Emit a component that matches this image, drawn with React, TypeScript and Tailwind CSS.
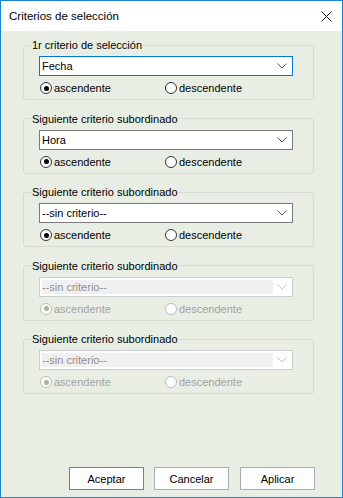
const font = "font-['Liberation_Sans',Arial,sans-serif]";

type Criterion = {
  label: string;
  value: string;
  enabled: boolean;
  focused?: boolean;
};

const criteria: Criterion[] = [
  { label: "1r criterio de selección", value: "Fecha", enabled: true, focused: true },
  { label: "Siguiente criterio subordinado", value: "Hora", enabled: true },
  { label: "Siguiente criterio subordinado", value: "--sin criterio--", enabled: true },
  { label: "Siguiente criterio subordinado", value: "--sin criterio--", enabled: false },
  { label: "Siguiente criterio subordinado", value: "--sin criterio--", enabled: false },
];

function Chevron({ enabled }: { enabled: boolean }) {
  return (
    <svg width="10" height="6" viewBox="0 0 10 6" aria-hidden="true">
      <path
        d="M0.5 0.5 L5 5 L9.5 0.5"
        fill="none"
        stroke={enabled ? "#5a5a5a" : "#c4c4c4"}
        strokeWidth="1"
      />
    </svg>
  );
}

function Radio({
  checked,
  enabled,
  label,
}: {
  checked: boolean;
  enabled: boolean;
  label: string;
}) {
  return (
    <div className="flex h-[14px] items-center">
      <span
        className={`flex h-[12px] w-[12px] items-center justify-center rounded-full border bg-white ${
          enabled ? "border-[#333333]" : "border-[#bcbcbc]"
        }`}
      >
        {checked && (
          <span
            className={`h-[5px] w-[5px] rounded-full ${
              enabled ? "bg-black" : "bg-[#a3b59b]"
            }`}
          />
        )}
      </span>
      <span
        className={`ml-[2px] text-[11px] leading-[14px] ${
          enabled ? "text-black" : "text-[#a2a2a2]"
        }`}
      >
        {label}
      </span>
    </div>
  );
}

function CriterionGroup({ c }: { c: Criterion }) {
  const borderColor = !c.enabled
    ? "border-[#cccccc]"
    : c.focused
      ? "border-[#0078d7]"
      : "border-[#7a7a7a]";
  return (
    <fieldset className="m-0 w-[291px] rounded-[3px] border border-[#d6dad2] p-0 pb-[4px]">
      <legend className="ml-[7px] px-[1px] text-[11px] leading-[14px] text-black">
        {c.label}
      </legend>
      <div
        className={`ml-[15px] mt-[4px] flex h-[20px] w-[254px] items-center border bg-white ${borderColor}`}
      >
        {c.enabled ? (
          <span className="ml-[2px] flex-1 text-[11px] leading-[14px] text-black">
            {c.value}
          </span>
        ) : (
          <span className="ml-[2px] flex h-[14px] w-[231px] items-center bg-[#f0f0f0] text-[11px] leading-[14px] text-[#8e8e8e]">
            {c.value}
          </span>
        )}
        <span className="ml-auto mr-[5px] flex items-center">
          <Chevron enabled={c.enabled} />
        </span>
      </div>
      <div className="ml-[16px] mt-[5px] flex">
        <div className="w-[125px]">
          <Radio checked enabled={c.enabled} label="ascendente" />
        </div>
        <Radio checked={false} enabled={c.enabled} label="descendente" />
      </div>
    </fieldset>
  );
}

function Button({ label, isDefault }: { label: string; isDefault?: boolean }) {
  return (
    <button
      className={`flex h-[23px] w-[75px] items-center justify-center border bg-[#fdfdfd] text-[11px] leading-[14px] text-black ${
        isDefault ? "border-[#6f8d5c]" : "border-[#adadad]"
      }`}
    >
      {label}
    </button>
  );
}

export default function App() {
  return (
    <div
      className={`${font} flex h-[498px] w-[343px] flex-col border border-[#1883d7] bg-[#e9eee4]`}
    >
      <div className="flex h-[30px] shrink-0 items-center bg-white pl-[8px] pr-[10px]">
        <span className="text-[11.5px] leading-[14px] text-black">
          Criterios de selección
        </span>
        <svg
          className="ml-auto"
          width="11"
          height="11"
          viewBox="0 0 11 11"
          aria-hidden="true"
        >
          <path d="M0.5 0.5 L10.5 10.5 M10.5 0.5 L0.5 10.5" stroke="#111" strokeWidth="1" />
        </svg>
      </div>
      <div className="flex flex-1 flex-col pl-[22px] pt-[7px]">
        <div className="flex flex-col gap-[11.5px]">
          {criteria.map((c, i) => (
            <CriterionGroup key={i} c={c} />
          ))}
        </div>
        <div className="mb-[7px] ml-[46px] mt-auto flex">
          <Button label="Aceptar" isDefault />
          <span className="ml-[10px]">
            <Button label="Cancelar" />
          </span>
          <span className="ml-[11px]">
            <Button label="Aplicar" />
          </span>
        </div>
      </div>
    </div>
  );
}
